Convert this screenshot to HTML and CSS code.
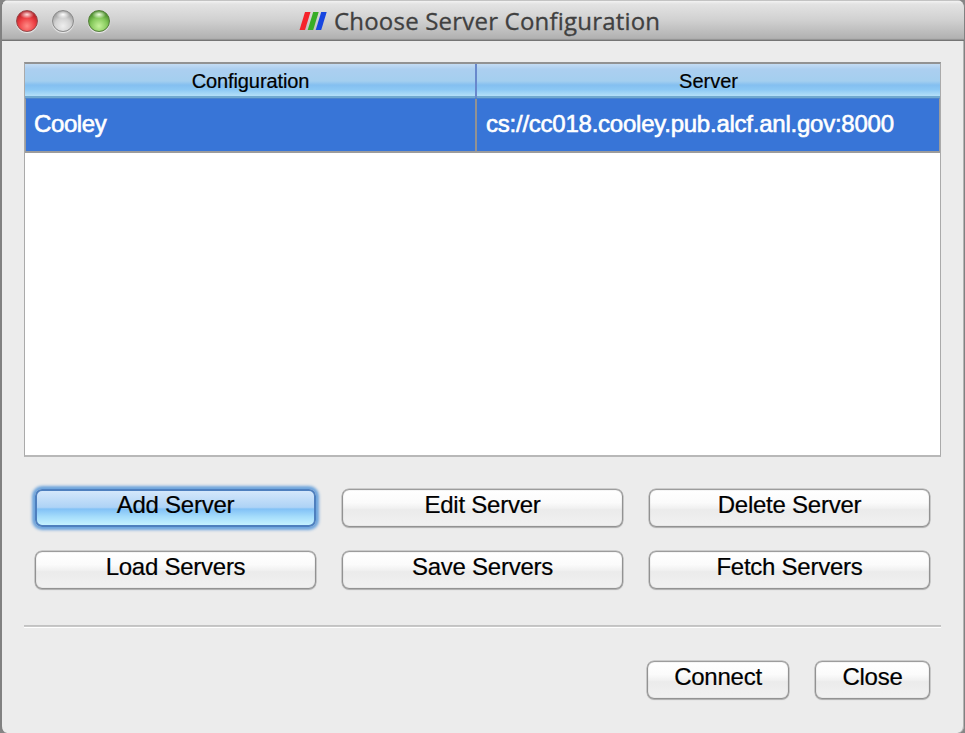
FILE: index.html
```html
<!DOCTYPE html>
<html lang="en">
<head>
<meta charset="utf-8">
<title>Choose Server Configuration</title>
<link rel="stylesheet" href="styles.css">
</head>
<body>
<main class="window">
  <header class="titlebar">
    <div class="lights"><i class="light red"></i><i class="light grey"></i><i class="light green"></i></div>
    <svg class="logo" width="28" height="20" viewBox="0 0 28 20"><path fill="#f5232b" d="M6 1h5.500L6 19H.5z"/><path fill="#38ad27" d="M14.200 1h5.500l-5.500 18H8.700z"/><path fill="#1746e0" d="M22.200 1h5.500l-5.500 18h-5.500z"/></svg>
    <h1 class="title">Choose Server Configuration</h1>
  </header>
  <section class="content">
    <div class="table">
      <div class="row head"><div class="cell"><span class="t-config">Configuration</span></div><div class="cell"><span class="t-server">Server</span></div></div>
      <div class="row selected"><div class="cell"><span class="t-name">Cooley</span></div><div class="cell"><span class="t-url">cs://cc018.cooley.pub.alcf.anl.gov:8000</span></div></div>
    </div>
    <div class="actions">
      <button class="button focused">Add Server</button>
      <button class="button">Edit Server</button>
      <button class="button">Delete Server</button>
      <button class="button">Load Servers</button>
      <button class="button">Save Servers</button>
      <button class="button">Fetch Servers</button>
    </div>
    <hr class="rule">
    <footer class="footer">
      <button class="button connect">Connect</button>
      <button class="button close">Close</button>
    </footer>
  </section>
</main>
</body>
</html>
```
FILE: styles.css
```css
* { box-sizing: border-box; }
html, body { margin: 0; height: 100%; overflow: hidden; }
body { background: #858585; font-family: "Liberation Sans", Arial, sans-serif; }
.window {
  height: 733px;
  border: solid #818181;
  border-width: 0 1px 0 2px;
  border-radius: 8px 8px 7px 7px;
  background: #ececec;
  overflow: hidden;
  box-shadow: inset -1px 0 #b4b4b4;
}
.titlebar {
  display: flex;
  align-items: center;
  height: 41px;
  padding-left: 14px;
  border-top: 1px solid #c3c3c3;
  border-bottom: 1px solid #757575;
  background: linear-gradient(#f3f3f3 0, #e3e3e3 3px, #d0d0d0 50%, #b2b2b2 37px, #aaa 38px, #808080 39px);
}
.lights { display: flex; gap: 14px; width: 283px; }
.light { width: 22px; height: 22px; border-radius: 50%; border: 1px solid; box-shadow: 0 1px 1px #eee; }
.red { border-color: #98494a; background: radial-gradient(ellipse 7px 4px at 50% 18%, #ffdede, transparent), radial-gradient(circle at 50% 75%, #ff8b86 0, #ee4044 45%, #b72128 75%); }
.grey { border-color: #8b8b8b; background: radial-gradient(ellipse 7px 4px at 50% 18%, #fff, transparent), radial-gradient(circle at 50% 75%, #eee 0, #d2d2d2 45%, #a0a0a0 75%); }
.green { border-color: #55803b; background: radial-gradient(ellipse 7px 4px at 50% 18%, #efffe0, transparent), radial-gradient(circle at 50% 75%, #c5f29a 0, #85c95b 45%, #4c8f2d 75%); }
.logo { flex: none; margin-right: 7px; }
.title { margin: 0; color: #404040; font: 400 24px/32px "Open Sans", sans-serif; letter-spacing: .2px; white-space: nowrap; -webkit-text-stroke: .3px #404040; }
.content { padding: 21px 23px 0 22px; }
.table { height: 395px; border: 1px solid #aaa; border-top: 2px solid #929292; border-bottom: 2px solid #b8b8b8; background: #fff; }
.row { display: grid; grid-template-columns: 452px 1fr; }
.head { height: 34px; background: linear-gradient(#c4dcf3 0, #accff0 15%, #a4cfef 50%, #84bff0 62%, #8cc8f4 75%, #b5e0f8 94%, #70a9d0 95%); font-size: 20px; line-height: 34px; text-align: center; color: #000; -webkit-text-stroke: .2px #000; }
.head .cell:first-child { padding-left: 1px; border-right: 2px solid #6888cc; }
.selected { height: 55px; border: solid #9c9c9c; border-width: 1px 1px 2px 1px; border-top-color: #4c83cc; background: #3875d7; color: #fff; font-size: 24px; line-height: 50px; grid-template-columns: 451px 1fr; -webkit-text-stroke: .6px #fff; }
.selected .cell { padding-left: 9px; white-space: nowrap; }
.selected .cell:first-child { padding-left: 8px; border-right: 2px solid #929292; }
.t-config { letter-spacing: -.1px; }
.t-name { letter-spacing: -.4px; }
.t-url { letter-spacing: -.24px; }
.actions { display: grid; grid-template-columns: repeat(3, 281px); gap: 24px 26px; padding: 32px 0 0 11px; }
.button {
  display: block;
  height: 38px;
  margin: 0;
  padding: 0 0 7px;
  border: 1px solid #929292;
  border-top-color: #9c9c9c;
  border-radius: 7px;
  background: linear-gradient(#fff 0, #fbfbfb 35%, #f1f1f1 50%, #ebebeb 55%, #f1f1f1 100%);
  box-shadow: 0 0 0 .5px #aaa, 0 1px 1px #b8b8b8, inset 0 0 1px #999;
  color: #000;
  font: 24px/30px "Liberation Sans", Arial, sans-serif;
  letter-spacing: -.25px;
  text-align: center;
  -webkit-text-stroke: .2px #000;
}
.focused {
  border: 2px solid #4e7fbe;
  padding-bottom: 6px;
  background: linear-gradient(#d4e7fb 0, #aed3f6 48%, #82c1f6 53%, #a4dcfb 75%, #c6f2ff 100%);
  box-shadow: 0 0 3px 3px #6ba3dc;
  line-height: 28px;
}
.rule { height: 3px; margin: 36px 0 0; border: 0; background: linear-gradient(#c2c2c2 0 1px, #c8c8c8 1px 2px, #fff 2px); }
.footer { display: flex; justify-content: flex-end; gap: 26px; padding: 33px 11px 0 0; }
.connect { width: 142px; }
.close { width: 115px; }
```
